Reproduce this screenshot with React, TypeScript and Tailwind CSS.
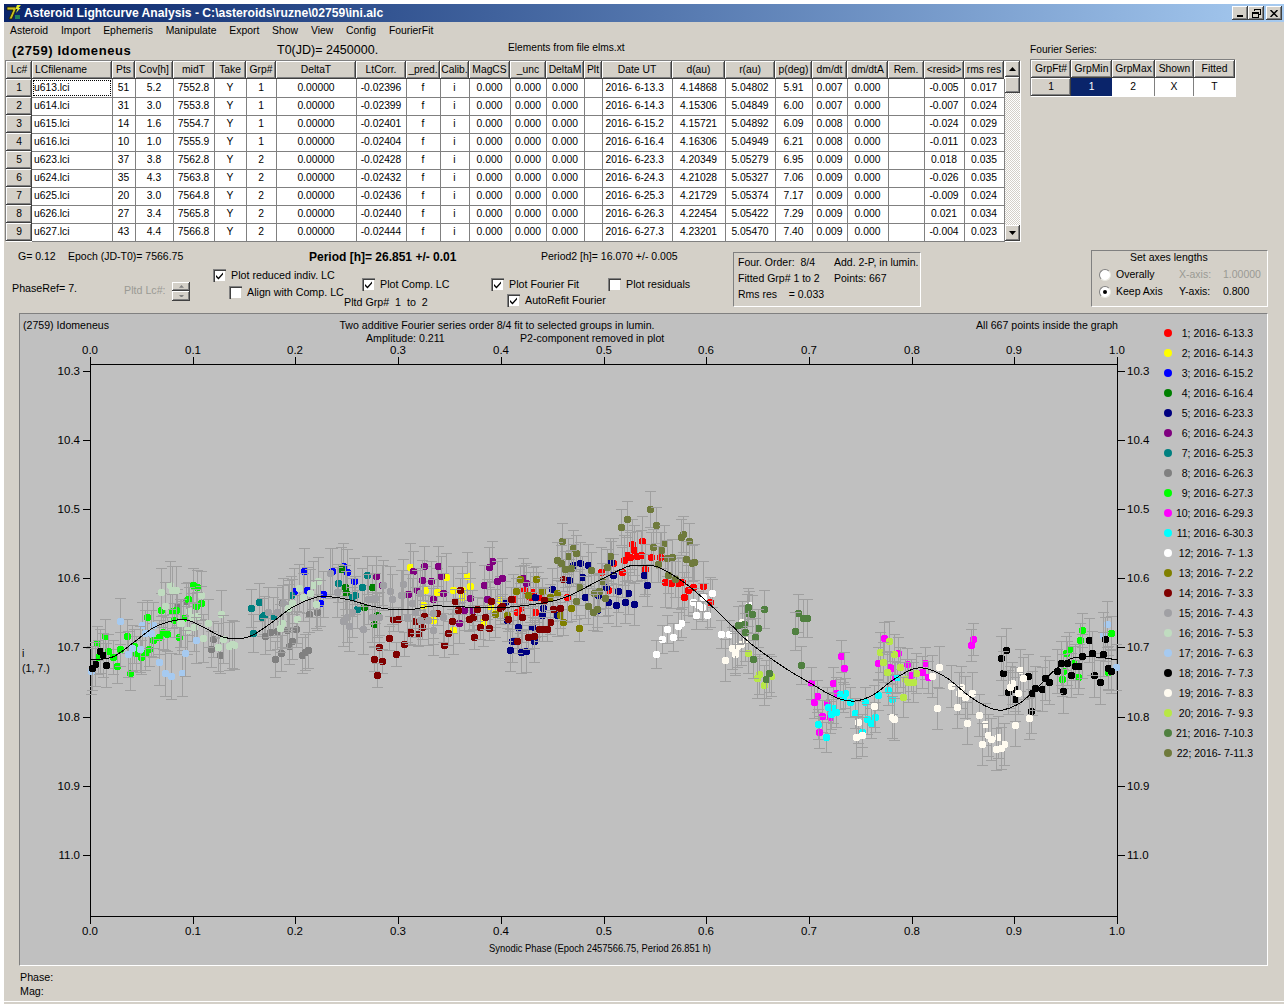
import React from 'react';

const raised = 'shadow-[inset_-1px_-1px_0_#404040,inset_1px_1px_0_#ffffff,inset_-2px_-2px_0_#808080]';

const colWidths = [26, 80, 23, 38, 41, 32, 30, 80, 50, 34, 29, 41, 36, 38, 18, 70, 53, 50, 37, 35, 41, 36, 40, 40];
const headers = ['Lc#', 'LCfilename', 'Pts', 'Cov[h]', 'midT', 'Take', 'Grp#', 'DeltaT', 'LtCorr.', '_pred.', 'Calib.', 'MagCS', '_unc', 'DeltaM', 'Plt', 'Date UT', 'd(au)', 'r(au)', 'p(deg)', 'dm/dt', 'dm/dtA', 'Rem.', '<resid>', 'rms res'];

// name, pts, cov, midT, grp, ltcorr, date, d, r, p, dmdt, resid, rms
const rows = [
  ['u613.lci', '51', '5.2', '7552.8', '1', '-0.02396', '2016- 6-13.3', '4.14868', '5.04802', '5.91', '0.007', '-0.005', '0.017'],
  ['u614.lci', '31', '3.0', '7553.8', '1', '-0.02399', '2016- 6-14.3', '4.15306', '5.04849', '6.00', '0.007', '-0.007', '0.024'],
  ['u615.lci', '14', '1.6', '7554.7', '1', '-0.02401', '2016- 6-15.2', '4.15721', '5.04892', '6.09', '0.008', '-0.024', '0.029'],
  ['u616.lci', '10', '1.0', '7555.9', '1', '-0.02404', '2016- 6-16.4', '4.16306', '5.04949', '6.21', '0.008', '-0.011', '0.023'],
  ['u623.lci', '37', '3.8', '7562.8', '2', '-0.02428', '2016- 6-23.3', '4.20349', '5.05279', '6.95', '0.009', '0.018', '0.035'],
  ['u624.lci', '35', '4.3', '7563.8', '2', '-0.02432', '2016- 6-24.3', '4.21028', '5.05327', '7.06', '0.009', '-0.026', '0.035'],
  ['u625.lci', '20', '3.0', '7564.8', '2', '-0.02436', '2016- 6-25.3', '4.21729', '5.05374', '7.17', '0.009', '-0.009', '0.024'],
  ['u626.lci', '27', '3.4', '7565.8', '2', '-0.02440', '2016- 6-26.3', '4.22454', '5.05422', '7.29', '0.009', '0.021', '0.034'],
  ['u627.lci', '43', '4.4', '7566.8', '2', '-0.02444', '2016- 6-27.3', '4.23201', '5.05470', '7.40', '0.009', '-0.004', '0.023'],
];

const groups = [
  ['2016- 6-13.3', '#ff0000'], ['2016- 6-14.3', '#ffff00'], ['2016- 6-15.2', '#0000ff'], ['2016- 6-16.4', '#008000'],
  ['2016- 6-23.3', '#000080'], ['2016- 6-24.3', '#800080'], ['2016- 6-25.3', '#008080'], ['2016- 6-26.3', '#808080'],
  ['2016- 6-27.3', '#00ff00'], ['2016- 6-29.3', '#ff00ff'], ['2016- 6-30.3', '#00ffff'], ['2016- 7- 1.3', '#ffffff'],
  ['2016- 7- 2.2', '#808000'], ['2016- 7- 3.3', '#800000'], ['2016- 7- 4.3', '#a0a0a4'], ['2016- 7- 5.3', '#c0dcc0'],
  ['2016- 7- 6.3', '#a6caf0'], ['2016- 7- 7.3', '#000000'], ['2016- 7- 8.3', '#fffbf0'], ['2016- 7- 9.3', '#b8e846'],
  ['2016- 7-10.3', '#508040'], ['2016- 7-11.3', '#6f7a3c'],
];

// points were read off 3x crops: [group, originX, originY, x,y,x,y...]
const pointSets: [number, number, number, number[]][] = [
  [1, 400, 480, [727,184,697,192,702,210,682,225,672,240,690,232,710,228,722,226,752,232,780,230,640,250,603,275,665,275,736,268,795,305,812,310,835,310,845,305,865,330,880,320,908,317,852,352,930,365,500,352,625,330,373,330,400,335,415,352,390,352,340,358,360,385,350,395,405,395,367,410]],
  [2, 60, 540, [1050,82]],
  [2, 400, 480, [30,262,138,292,200,287,160,330,187,350,270,378,210,318,75,330,110,335,185,330,160,450,250,425,285,400,300,360,70,375,100,420]],
  [3, 60, 540, [733,93,741,150,703,152,790,162,815,92,850,78,860,97,883,124,780,190]],
  [4, 60, 540, [843,86,855,140,857,158,935,142,943,253,912,200,950,225]],
  [5, 400, 480, [520,255,541,250,564,256,547,292,507,301,632,247,640,285,733,286,742,316,617,320,655,334,685,340,703,373,675,367,648,376,623,365,555,352,455,326,593,345,405,350,430,385,470,405,395,440,355,440,403,482,336,484,331,511,362,516,378,514,315,365,320,420,425,405,590,390]],
  [6, 60, 540, [949,109,1045,162,967,135]],
  [6, 400, 480, [40,273,73,259,113,259,123,287,92,303,66,300,25,343,50,330,130,340,99,358,277,243,267,262,252,316,292,303,307,295,260,358,210,355,192,390,178,428,370,295,378,310,215,390]],
  [7, 60, 540, [574,204,597,187,607,232,612,225,580,280,640,228,694,165,922,106,875,170,885,165,890,207,835,130,905,140]],
  [8, 60, 540, [350,200,378,184,460,298,452,328,480,345,646,358,664,340,686,317,696,303,726,345,735,335,743,330,680,270,630,277,615,288,650,272,708,268,748,222,770,215,665,190]],
  [9, 60, 540, [110,310,134,287,115,352,145,332,172,379,211,400,181,328,160,350,202,287,228,340,222,318,243,352,255,338,268,327,260,232,302,211,280,300,296,290,310,276,320,283,358,292,343,240,335,213,347,210,370,233,385,178,398,136,412,140,408,198,422,190]],
  [9, 750, 600, [997,91,1084,100,990,120,958,147,948,160,940,213,935,237,983,230,1075,215,970,190]],
  [10, 750, 600, [403,115,443,160,383,188,420,200,425,205,470,193,525,190,515,215,482,225,435,230,273,169,283,205,248,250,183,250,258,280,202,289,192,307,230,310,217,349,240,352,207,396,670,118,662,134,535,232]],
  [11, 750, 600, [270,283,285,280,280,290,300,307,345,305,383,284,415,270,440,232,427,298,235,320,248,325,258,335,242,342,315,340,350,358,375,352,362,370,205,373,227,412,335,396]],
  [12, 400, 480, [937,340,880,367,895,375,905,382,888,405,922,405,963,463,987,463,844,428,835,438,802,448,820,472,787,478,768,523,1048,375,910,350]],
  [13, 400, 480, [361,298,409,298,347,332,425,334,450,350,383,345,285,402,320,405,470,338,480,405,490,426,514,385,538,445]],
  [14, 60, 540, [1000,238,1015,238,987,295,957,322,943,358,967,364,951,405,1009,343,1033,313,1050,278]],
  [14, 400, 480, [181,331,165,363,175,390,232,388,272,362,300,385,305,378,12,492,30,457,54,463,132,495,143,460,157,424,218,412,208,418,222,472,240,442,266,445,255,410,325,418,332,358,45,422,65,440,72,408,110,400,490,298,432,360,460,388,481,385,450,426,425,446,440,448,385,472,403,468,352,484,365,410,417,448]],
  [15, 60, 540, [625,215,650,215,670,190,688,195,810,100,830,155,860,230,875,215,850,243,868,258,910,267,935,232,958,232,925,178,945,175,968,135,990,152,997,178,1022,165,1030,133,1040,230]],
  [15, 400, 480, [10,312,5,345,35,370,20,410,60,340,45,395,100,400,130,410,100,450,60,420,85,420]],
  [16, 60, 540, [303,155,330,135,335,150,348,150,314,197,387,214,422,166,396,231,412,228,445,248,484,221,380,270,362,250,402,260,430,295,490,296,475,322,508,318,522,316,515,313,360,250,775,122,760,136,718,145,695,190,685,205,712,236,665,248,660,265,768,193,730,170,750,160]],
  [17, 60, 540, [181,244,247,256,255,278,280,254,272,280,205,343,217,323,241,328,298,367,314,398,334,408,367,400,375,340,409,301,92,392]],
  [17, 750, 600, [1072,73,1060,105,1097,200]],
  [18, 60, 540, [120,333,128,345,105,373,97,384,139,376]],
  [18, 750, 600, [769,151,752,175,760,220,773,275,796,266,795,298,833,228,842,332,847,278,855,263,875,268,885,235,897,245,940,274,920,213,932,190,952,190,975,197,987,198,963,225,1033,226,1051,246,1017,121,1066,118,1027,160,1060,162,997,168,1075,205,1083,212]],
  [19, 400, 480, [995,503,1012,497,1022,493,1005,522]],
  [19, 720, 600, [15,180,45,156,75,120,66,66]],
  [19, 750, 600, [568,202,604,259,632,262,628,280,645,290,667,278,562,325,620,322,688,346,652,370,705,373,714,406,722,416,743,412,697,433,763,433,752,445,738,447,796,376,838,355,810,211,820,234,787,250,780,262,805,280,373,319,325,367,425,352,432,358,318,412,335,405,545,228]],
  [20, 400, 480, [1045,518]],
  [20, 750, 600, [28,222,20,235,62,228,43,255,417,123,390,157,432,162,400,185,410,217,450,200,498,220,465,238,475,245,488,247,460,290]],
  [21, 400, 480, [1040,400,1033,433]],
  [21, 720, 600, [84,21,54,75,75,96]],
  [21, 750, 600, [43,28,145,40,158,55,170,55,135,93,5,43,25,85,15,112,8,178,153,196,48,238,58,220]],
  [22, 400, 480, [487,184,519,205,529,218,504,228,471,240,483,248,495,268,513,265,574,270,631,228,621,262,664,141,682,118,751,88,769,135,850,162,843,172,867,184,792,189,760,200,783,210,815,232,800,235,858,238,875,250,883,245,774,252,805,284,825,297,605,303,583,340,597,333,537,320,528,364,616,355,565,378,580,395,590,388]],
];

const points = pointSets.flatMap(([g, ox, oy, p]) => {
  const out: { g: number; x: number; y: number; e: number }[] = [];
  for (let i = 0; i < p.length; i += 2) {
    out.push({ g, x: Math.round(ox + p[i] / 3), y: Math.round(oy + p[i + 1] / 3), e: 12 + ((i * 7 + g * 13) % 14) });
  }
  return out;
}).sort((a, b) => a.g - b.g);

const curvePts = [
  [90,660],[103,659],[115,656],[133,643],[153,628],[173,620.7],[187,620],[203,627],[223,637],[240,638.7],[253,635],[273,621.7],[293,607],[317,597],[330,596.7],[350,600],[370,605.7],[390,609.3],[410,609.7],[433,606],[465,607],[500,607.7],[543,603],[567,596.7],[600,580],[627,566.7],[640,565.3],[657,566.7],[683,581.7],[707,601.7],[733,626.7],[750,643],[783,666.7],[810,683],[837,698],[855,701],[873,695],[893,680],[913,669],[927,668.7],[947,678],[970,696.7],[990,708],[1003,710],[1020,703],[1037,688],[1053,671.7],[1070,659],[1087,656.7],[1103,657.7],[1117,660],
];

// catmull-rom through the read points
function curvePath() {
  let d = `M${curvePts[0][0]} ${curvePts[0][1]}`;
  for (let i = 0; i < curvePts.length - 1; i++) {
    const p0 = curvePts[Math.max(i - 1, 0)];
    const p1 = curvePts[i];
    const p2 = curvePts[i + 1];
    const p3 = curvePts[Math.min(i + 2, curvePts.length - 1)];
    d += ` C${p1[0] + (p2[0] - p0[0]) / 6} ${p1[1] + (p2[1] - p0[1]) / 6} ${p2[0] - (p3[0] - p1[0]) / 6} ${p2[1] - (p3[1] - p1[1]) / 6} ${p2[0]} ${p2[1]}`;
  }
  return d;
}

function Checkbox({ checked }: { checked?: boolean }) {
  return (
    <span className="w-[13px] h-[13px] shrink-0 bg-white shadow-[inset_1px_1px_0_#808080,inset_2px_2px_0_#404040,inset_-1px_-1px_0_#d4d0c8] flex items-center justify-center">
      {checked && (
        <svg width="9" height="9" viewBox="0 0 9 9">
          <path d="M1 4 L3.5 6.5 L8 1.5 L8 3.5 L3.5 8.5 L1 6 Z" fill="#000" />
        </svg>
      )}
    </span>
  );
}

function CheckLabel({ label, checked }: { label: string; checked?: boolean }) {
  return (
    <div className="flex items-center gap-[5px] whitespace-nowrap">
      <Checkbox checked={checked} />
      <span>{label}</span>
    </div>
  );
}

function Radio({ checked }: { checked?: boolean }) {
  return (
    <span className="w-3 h-3 rounded-full bg-white border border-t-[#808080] border-l-[#808080] border-r-[#e8e8e0] border-b-[#e8e8e0] flex items-center justify-center shrink-0">
      {checked && <span className="w-1 h-1 rounded-full bg-black" />}
    </span>
  );
}

function ArrowUp({ color = '#000', w = 7 }: { color?: string; w?: number }) {
  return <svg width={w} height={w * 4 / 7} viewBox="0 0 7 4"><path d="M3.5 0 L7 4 L0 4 Z" fill={color} /></svg>;
}

function ArrowDown({ color = '#000', w = 7 }: { color?: string; w?: number }) {
  return <svg width={w} height={w * 4 / 7} viewBox="0 0 7 4"><path d="M0 0 L7 0 L3.5 4 Z" fill={color} /></svg>;
}

function Chart() {
  const xs = [0, 0.1, 0.2, 0.3, 0.4, 0.5, 0.6, 0.7, 0.8, 0.9, 1];
  const ys = [10.3, 10.4, 10.5, 10.6, 10.7, 10.8, 10.9, 11.0];
  const px = (v: number) => Math.round(90 + v * 1027);
  const py = (v: number) => Math.round(371 + (v - 10.3) * 691);
  return (
    <svg width="1140" height="651" viewBox="20 314 1140 651" className="shrink-0">
      <g fontSize="10.6px" fill="#000">
        <text x="23" y="329">(2759) Idomeneus</text>
        <text x="497" y="329" textAnchor="middle">Two additive Fourier series order 8/4 fit to selected groups in lumin.</text>
        <text x="366" y="342">Amplitude: 0.211</text>
        <text x="520" y="342">P2-component removed in plot</text>
        <text x="976" y="329">All 667 points inside the graph</text>
        <text x="22" y="657">i</text>
        <text x="22" y="672">(1, 7.)</text>
        <text x="600" y="952" textAnchor="middle" textLength="222" lengthAdjust="spacingAndGlyphs">Synodic Phase (Epoch 2457566.75, Period 26.851 h)</text>
        {xs.map((v) => (
          <g key={v}>
            <text x={px(v)} y="354" textAnchor="middle" fontSize="11.5px">{v.toFixed(1)}</text>
            <text x={px(v)} y="935" textAnchor="middle" fontSize="11.5px">{v.toFixed(1)}</text>
          </g>
        ))}
        {ys.map((v) => (
          <g key={v}>
            <text x="80" y={py(v) + 4} textAnchor="end" fontSize="11.5px">{v.toFixed(1)}</text>
            <text x="1127" y={py(v) + 4} fontSize="11.5px">{v.toFixed(1)}</text>
          </g>
        ))}
      </g>
      <g shapeRendering="crispEdges" stroke="#000" strokeWidth="1">
        <rect x="90.5" y="364.5" width="1027" height="552" fill="none" />
        {xs.map((v) => (
          <g key={v}>
            <line x1={px(v) + 0.5} x2={px(v) + 0.5} y1="357" y2="364" />
            <line x1={px(v) + 0.5} x2={px(v) + 0.5} y1="917" y2="924" />
          </g>
        ))}
        {ys.map((v) => (
          <g key={v}>
            <line x1="83" x2="90" y1={py(v) + 0.5} y2={py(v) + 0.5} />
            <line x1="1118" x2="1125" y1={py(v) + 0.5} y2={py(v) + 0.5} />
          </g>
        ))}
      </g>
      <g shapeRendering="crispEdges">
        {points.map((p, i) => (
          <g key={i}>
            <g stroke="#a0a0a0" strokeWidth="1">
              <line x1={p.x + 0.5} x2={p.x + 0.5} y1={p.y - p.e} y2={p.y + p.e} />
              <line x1={p.x - 5} x2={p.x + 6} y1={p.y - p.e + 0.5} y2={p.y - p.e + 0.5} />
              <line x1={p.x - 5} x2={p.x + 6} y1={p.y + p.e + 0.5} y2={p.y + p.e + 0.5} />
            </g>
            <circle cx={p.x + 0.5} cy={p.y + 0.5} r="3.9" fill={groups[p.g - 1][1]} />
          </g>
        ))}
        <path d={curvePath()} fill="none" stroke="#000" strokeWidth="1" />
      </g>
    </svg>
  );
}

export default function App() {
  const cellBase = 'border-r border-b border-[#808080] p-0 text-center whitespace-pre overflow-hidden';
  return (
    <div className="w-[1288px] h-[1004px] bg-white pl-1 pt-1 overflow-hidden font-['Liberation_Sans',Arial,sans-serif] text-[10.7px] leading-none text-black">
      <div className="w-[1280px] h-[1000px] bg-[#d4d0c8] flex flex-col">
        {/* title bar */}
        <div className="h-[18px] shrink-0 bg-gradient-to-r from-[#0a246a] to-[#a6caf0] flex items-center pl-0.5 pr-0.5">
          <svg width="16" height="16" viewBox="0 0 16 16" className="shrink-0">
            <path d="M1 2 L10 2 L10 4.5 L6 14 L3 14 L7 5 L1 5 Z" fill="#c8c020" stroke="#202000" strokeWidth="0.8" />
            <path d="M11 0 L15 0 L12.5 3 L14.5 3 L10 8 L11.5 4 L9.5 4 Z" fill="#e8f030" />
            <rect x="9" y="10" width="5" height="4" fill="#208060" />
          </svg>
          <span className="ml-[2px] font-bold text-white text-[12.15px] whitespace-nowrap">Asteroid Lightcurve Analysis - C:\asteroids\ruzne\02759\ini.alc</span>
          <div className="ml-auto flex items-center">
            <button className={`w-4 h-[14px] bg-[#d4d0c8] ${raised} flex items-end justify-center pb-[3px]`}>
              <span className="w-[6px] h-0.5 bg-black" />
            </button>
            <button className={`w-4 h-[14px] bg-[#d4d0c8] ${raised} flex items-center justify-center`}>
              <svg width="9" height="9" viewBox="0 0 9 9" shapeRendering="crispEdges" fill="none" stroke="#000">
                <path d="M2.5 2 V0.5 H8.5 V5.5 H6.5" strokeWidth="1" />
                <path d="M0.5 3.5 H6.5 V8.5 H0.5 Z M0.5 4 H6.5" strokeWidth="1" />
              </svg>
            </button>
            <button className={`ml-0.5 w-4 h-[14px] bg-[#d4d0c8] ${raised} flex items-center justify-center`}>
              <svg width="8" height="7" viewBox="0 0 8 7"><path d="M0.5 0 L7.5 7 M7.5 0 L0.5 7" stroke="#000" strokeWidth="1.5" /></svg>
            </button>
          </div>
        </div>

        {/* menu */}
        <div className="h-[18px] shrink-0 flex items-center gap-[12.8px] pl-1.5 text-[10.4px]">
          {['Asteroid', 'Import', 'Ephemeris', 'Manipulate', 'Export', 'Show', 'View', 'Config', 'FourierFit'].map((m) => (
            <span key={m}>{m}</span>
          ))}
        </div>

        {/* tables */}
        <div className="h-[201px] shrink-0 flex">
          <div className="w-[1017px] shrink-0 pl-px">
            <div className="h-[20px] flex items-center">
              <span className="ml-[7px] w-[265px] font-bold text-[13px] tracking-[0.6px]">(2759) Idomeneus</span>
              <span className="w-[231px] text-[12.5px] whitespace-nowrap">T0(JD)= 2450000.</span>
              <span className="-mt-1 text-[10.2px]">Elements from file elms.xt</span>
            </div>
            <div className="flex w-[1015px] h-[181px] bg-white border-t border-t-[#808080] border-l border-l-[#808080] shadow-[1px_1px_0_#ffffff]">
              <table className="table-fixed border-collapse w-[998px] h-fit text-[10.3px]">
                <colgroup>
                  {colWidths.map((w, i) => <col key={i} style={{ width: w }} />)}
                </colgroup>
                <thead>
                  <tr className="h-[18px]">
                    {headers.map((h, i) => (
                      <th key={h} className={`${raised} bg-[#d4d0c8] p-0 font-normal overflow-hidden whitespace-nowrap ${i === 1 ? 'text-left pl-[3px]' : 'text-center'}`}>{h}</th>
                    ))}
                  </tr>
                </thead>
                <tbody>
                  {rows.map((r, i) => {
                    const cells = [r[1], r[2], r[3], 'Y', r[4], '0.00000', r[5], 'f', 'i', '0.000', '0.000', '0.000', '', r[6], r[7], r[8], r[9], r[10], '0.000', '', r[11], r[12]];
                    return (
                      <tr key={r[0]} className="h-[18px]">
                        <td className={`${raised} bg-[#d4d0c8] p-0 text-center`}>{i + 1}</td>
                        <td className={`border-r border-b border-[#808080] p-0 pl-[2px] ${i === 0 ? 'outline-1 outline-dotted outline-black -outline-offset-2' : ''}`}>{r[0]}</td>
                        {cells.map((c, j) => (
                          <td key={j} className={`${cellBase} ${j === 13 ? 'text-left pl-[3px]' : ''}`}>{c}</td>
                        ))}
                      </tr>
                    );
                  })}
                </tbody>
              </table>
              <div className="w-[16px] h-[180px] flex flex-col bg-[repeating-conic-gradient(#ffffff_0_25%,#d4d0c8_0_50%)] bg-[length:2px_2px]">
                <div className={`h-4 bg-[#d4d0c8] ${raised} flex items-center justify-center`}><ArrowUp /></div>
                <div className={`h-4 bg-[#d4d0c8] ${raised}`} />
                <div className="flex-1" />
                <div className={`h-4 bg-[#d4d0c8] ${raised} flex items-center justify-center`}><ArrowDown /></div>
              </div>
            </div>
          </div>
          <div className="ml-[9px] w-[206px]">
            <div className="h-[19px] pt-[5px] text-[10.2px]">Fourier Series:</div>
            <div className="bg-white border-t border-l border-[#808080] shadow-[1px_1px_0_#ffffff] w-[205px] text-[10.3px]">
              <div className="flex h-[18px]">
                {[['GrpFt#', 40], ['GrpMin', 41], ['GrpMax', 43], ['Shown', 39], ['Fitted', 41]].map(([h, w]) => (
                  <div key={h} style={{ width: w as number }} className={`${raised} bg-[#d4d0c8] flex items-center justify-center`}>{h}</div>
                ))}
              </div>
              <div className="flex h-[18px]">
                <div className={`w-10 ${raised} bg-[#d4d0c8] flex items-center justify-center`}>1</div>
                <div className="w-[41px] bg-[#0a246a] text-white flex items-center justify-center">1</div>
                <div className="w-[43px] border-r border-[#808080] flex items-center justify-center">2</div>
                <div className="w-[39px] border-r border-[#808080] flex items-center justify-center">X</div>
                <div className="w-[41px] flex items-center justify-center">T</div>
              </div>
            </div>
          </div>
        </div>

        {/* controls */}
        <div className="h-[72px] shrink-0 flex">
          <div className="w-[729px] shrink-0 flex flex-col">
            <div className="h-[27px] pt-[10px] flex text-[10.5px] whitespace-nowrap">
              <span className="ml-[14px] w-[50px]">G= 0.12</span>
              <span className="w-[241px]">Epoch (JD-T0)= 7566.75</span>
              <span className="w-[232px] font-bold text-[12px]">Period [h]= 26.851 +/- 0.01</span>
              <span>Period2 [h]= 16.070 +/- 0.005</span>
            </div>
            <div className="flex whitespace-nowrap">
              <div className="w-[120px] pl-2 pt-[15px]">PhaseRef= 7.</div>
              <div className="w-[89px] pt-[14px] flex">
                <span className="w-[48px] pt-[3px] text-[#9a9a94]">Pltd Lc#:</span>
                <div className="w-[18px] h-[19px] flex flex-col">
                  <div className={`h-[9px] ${raised} bg-[#d4d0c8] flex items-center justify-center`}><ArrowUp color="#808080" w={5} /></div>
                  <div className={`h-[10px] ${raised} bg-[#d4d0c8] flex items-center justify-center`}><ArrowDown color="#808080" w={5} /></div>
                </div>
              </div>
              <div className="w-[149px] pt-[1px] flex flex-col gap-[4px]">
                <CheckLabel label="Plot reduced indiv. LC" checked />
                <div className="ml-[16px]"><CheckLabel label="Align with Comp. LC" /></div>
              </div>
              <div className="w-[129px] flex flex-col">
                <div className="pt-[10px]"><CheckLabel label="Plot Comp. LC" checked /></div>
                <div className="-ml-[18px] mt-[6px]">Pltd Grp#&nbsp;&nbsp;1&nbsp;&nbsp;to&nbsp;&nbsp;2</div>
              </div>
              <div className="w-[117px] flex flex-col">
                <div className="pt-[10px]"><CheckLabel label="Plot Fourier Fit" checked /></div>
                <div className="ml-[16px] mt-[3px]"><CheckLabel label="AutoRefit Fourier" checked /></div>
              </div>
              <div className="pt-[10px]"><CheckLabel label="Plot residuals" /></div>
            </div>
          </div>
          <div className="mt-[11px] w-[188px] h-[55px] border border-t-[#808080] border-l-[#808080] border-r-white border-b-white pl-1 pt-[4px] grid grid-cols-[96px_1fr] auto-rows-[16px] text-[10.5px] whitespace-nowrap">
            <span>Four. Order:&nbsp;&nbsp;8/4</span>
            <span>Add. 2-P, in lumin.</span>
            <span>Fitted Grp# 1 to 2</span>
            <span>Points: 667</span>
            <span>Rms res&nbsp;&nbsp;&nbsp;&nbsp;= 0.033</span>
          </div>
          <div className="ml-[170px] mt-[9px] w-[177px] h-[57px] border border-t-[#808080] border-l-[#808080] border-r-white border-b-white pt-px text-[10.5px]">
            <div className="pl-[38px] h-[14px]">Set axes lengths</div>
            <div className="pl-[7px] grid grid-cols-[17px_63px_44px_1fr] auto-rows-[17px] items-center whitespace-nowrap">
              <Radio />
              <span>Overally</span>
              <span className="text-[#9a9a94]">X-axis:</span>
              <span className="text-[#9a9a94]">1.00000</span>
              <Radio checked />
              <span>Keep Axis</span>
              <span>Y-axis:</span>
              <span>0.800</span>
            </div>
          </div>
        </div>

        {/* plot */}
        <div className="ml-[15px] w-[1249px] h-[653px] shrink-0 bg-[#c0c0c0] border border-t-[#808080] border-l-[#808080] border-r-white border-b-white flex">
          <Chart />
          <div className="ml-1 pt-[9px] flex flex-col">
            {groups.map(([date, color], i) => (
              <div key={date} className="h-5 w-[89px] flex items-center text-[10.5px] whitespace-pre">
                <span className="w-2 h-2 rounded-full shrink-0" style={{ backgroundColor: color }} />
                <span className="ml-auto">{i + 1}; {date}</span>
              </div>
            ))}
          </div>
        </div>

        {/* status */}
        <div className="h-[36px] shrink-0 pl-4 pt-[6px] border-b border-b-white flex flex-col gap-[3px]">
          <span>Phase:</span>
          <span>Mag:</span>
        </div>
      </div>
    </div>
  );
}
